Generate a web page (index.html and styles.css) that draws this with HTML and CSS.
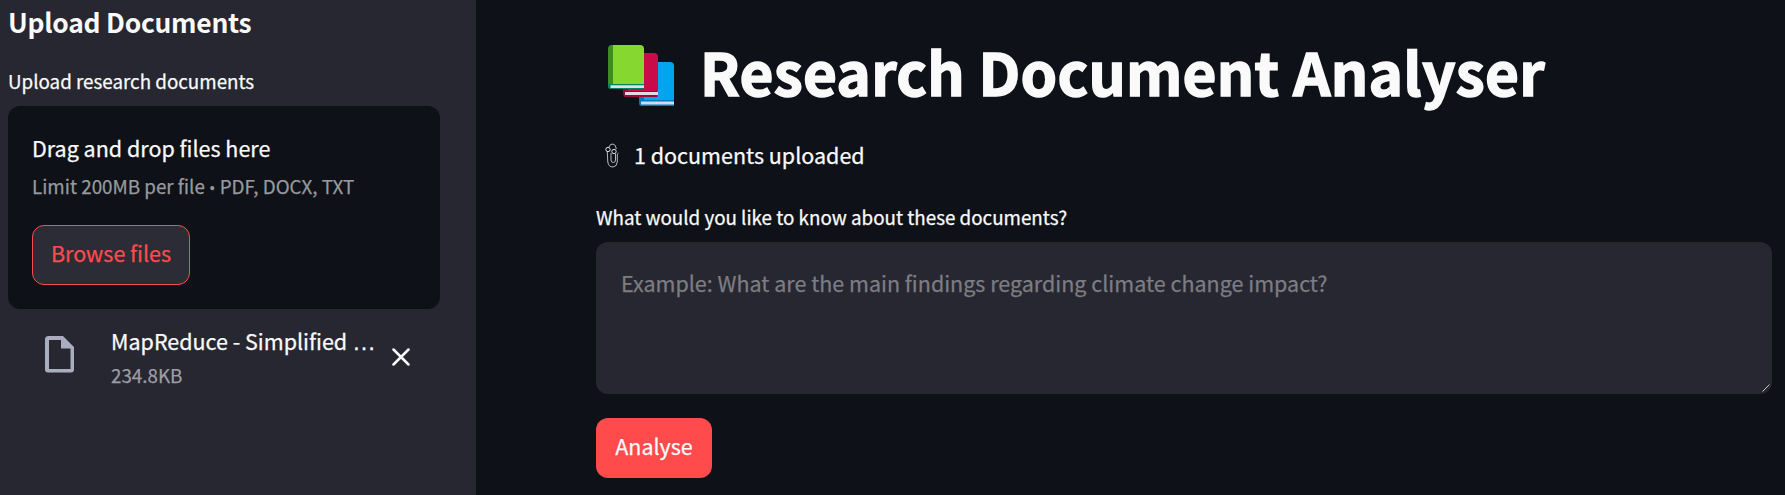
FILE: index.html
```html
<!DOCTYPE html>
<html lang="en">
<head>
<meta charset="utf-8">
<title>Research Document Analyser</title>
<link rel="stylesheet" href="styles.css">
</head>
<body>
<div class="app">
  <aside class="sidebar">
    <h2 class="side-title"><span>Upload Documents</span></h2>
    <p class="side-label"><span>Upload research documents</span></p>
    <section class="dropzone">
      <div class="drop-main"><span>Drag and drop files here</span></div>
      <div class="drop-hint"><span>Limit 200MB per file <span class="punct">•</span> PDF, DOCX, TXT</span></div>
      <button class="browse"><span>Browse files</span></button>
    </section>
    <div class="file">
      <svg class="file-icon" viewBox="0 0 29 37"><path fill="#a9adbf" fill-rule="evenodd" d="M3.500 0H18L29 11V33.500Q29 36.500 26 36.500H3Q0 36.500 0 33.500V3.500Q0 0 3.500 0ZM4 4V33H25.500V12.500H16V4Z"/></svg>
      <div class="file-text">
        <div class="file-name"><span>MapReduce - Simplified <span class="punct dots">…</span></span></div>
        <div class="file-size"><span>234.8KB</span></div>
      </div>
      <svg class="close" viewBox="0 0 18 18"><path d="M1.500 1.500L16.500 16.500M16.500 1.500L1.500 16.500" stroke="#fafafa" stroke-width="2.500" stroke-linecap="round"/></svg>
    </div>
  </aside>
  <main class="main">
    <h1 class="title">
      <svg class="books" viewBox="0 0 66 62">
        <path d="M31 21H62Q66 21 66 25V61H33Q31 61 31 58Z" fill="#0078b8"/>
        <path d="M36 17H62Q66 17 66 21V55H36Z" fill="#00a6ed"/>
        <path d="M33 56.500H66V59.500H33Z" fill="#cfdbe8"/>
        <path d="M15 12H45Q49.500 8 49.500 12V52H17Q15 51 15 48Z" fill="#990838"/>
        <path d="M20 8H46Q50 8 50 12V46H20Z" fill="#ca0b4a"/>
        <path d="M17 47H50V50H17Z" fill="#dedae2"/>
        <path d="M0 4Q0 0 4 0H30V44H4Q0 44 0 41Z" fill="#3f8d20"/>
        <path d="M0 39H36V44H3Q0 44 0 41Z" fill="#008463"/>
        <path d="M5 0H32Q36 0 36 4V39H5Z" fill="#86d72f"/>
        <path d="M2.500 40.300H36V43H2.500Z" fill="#d7e3e8"/>
      </svg>
      <span class="title-text">Research Document Analyser</span>
    </h1>
    <p class="status">
      <svg class="clip" viewBox="0 0 14 25" fill="none" stroke="#b9bbbf" stroke-width="1">
        <path d="M4 4Q5 .800 8 1Q11 1.500 11.300 6"/>
        <path d="M10.500 11V17Q10.500 19.500 8.300 19.500Q6 19.500 6 17V10"/>
        <path d="M2.300 9L2.800 19Q3.500 24 8 24Q12 23.500 12.300 19V11L13.500 10"/>
        <circle cx="3" cy="6.500" r="2.200" stroke="#e0e0e2"/><circle cx="9" cy="8.500" r="2.200" stroke="#e0e0e2"/>
      </svg>
      <span>1 documents uploaded</span>
    </p>
    <p class="question"><span>What would you like to know about these documents?</span></p>
    <div class="textarea">
      <span>Example: What are the main findings regarding climate change impact?</span>
      <svg class="grip" viewBox="0 0 8 8"><path d="M.500 7.500L7.500 .500" stroke="#c8c8cb" stroke-width="1"/></svg>
    </div>
    <button class="analyse"><span>Analyse</span></button>
  </main>
</div>
</body>
</html>
```
FILE: styles.css
```css
* { box-sizing: border-box; margin: 0; padding: 0; }
body {
  background: #0e1117;
  color: #fafafa;
  font-family: "Noto Sans CJK SC", "Noto Sans", sans-serif;
  font-size: 21.5px;
  font-weight: 400;
  -webkit-text-stroke: 0.25px currentColor;
  overflow: hidden;
}
span { white-space: nowrap; }
button { font: inherit; border: 0; display: flex; align-items: center; justify-content: center; border-radius: 12px; height: 60px; padding-bottom: 5px; }
.app { display: flex; width: 1785px; height: 495px; }
.sidebar { width: 476px; background: #262730; padding: 4px 0 0 8px; }
.side-title { font-size: 26.4px; letter-spacing: -0.25px; font-weight: 700; line-height: 36px; height: 60px; -webkit-text-stroke: 0; }
.side-label { font-size: 18.8px; line-height: 34px; height: 42px; }
.dropzone { width: 432px; height: 203px; background: #0e1117; border-radius: 12px; padding: 23px 24px 24px; }
.drop-main { line-height: 38px; height: 38px; }
.drop-hint { font-size: 18.8px; line-height: 38px; height: 58px; color: #989a9d; }
.punct { font-family: "Open Sans", sans-serif; line-height: 1; }
.drop-hint .punct { font-size: 17px; }
.dots { font-size: 24px; font-family: "Liberation Sans", sans-serif; }
.browse { width: 158px; background: #2b2c36; border: 1px solid #ff4b4b; color: #ff4b4b; }
.file { display: flex; width: 432px; padding-top: 13px; }
.file-icon { flex: none; width: 29px; height: 37px; margin: 14px 0 0 37px; }
.file-text { flex: none; width: 318px; padding-left: 37px; }
.file-name { line-height: 38px; height: 36px; }
.file-size { font-size: 18.8px; line-height: 34px; color: #9d9da2; }
.close { flex: none; width: 18px; height: 18px; margin-top: 26px; }
.main { flex: 1; padding: 30px 13px 0 120px; }
.title { display: flex; font-size: 58.5px; font-weight: 700; line-height: 82px; height: 105px; -webkit-text-stroke: 1.5px currentColor; letter-spacing: 0.25px; }
.books { width: 66px; height: 62px; margin: 15px 26px 0 12px; -webkit-text-stroke: 0; }
.status { display: flex; line-height: 40px; height: 65px; }
.clip { width: 14px; height: 25px; margin: 8px 15px 0 9px; }
.question { font-size: 18.8px; line-height: 34px; height: 42px; }
.textarea { position: relative; height: 152px; background: #262730; border-radius: 12px; padding: 22px 25px; line-height: 38px; color: #7c7d83; }
.grip { position: absolute; width: 8px; height: 8px; right: 2px; bottom: 2px; }
.analyse { width: 116px; background: #ff4b4b; color: #fafafa; margin-top: 24px; }
```
